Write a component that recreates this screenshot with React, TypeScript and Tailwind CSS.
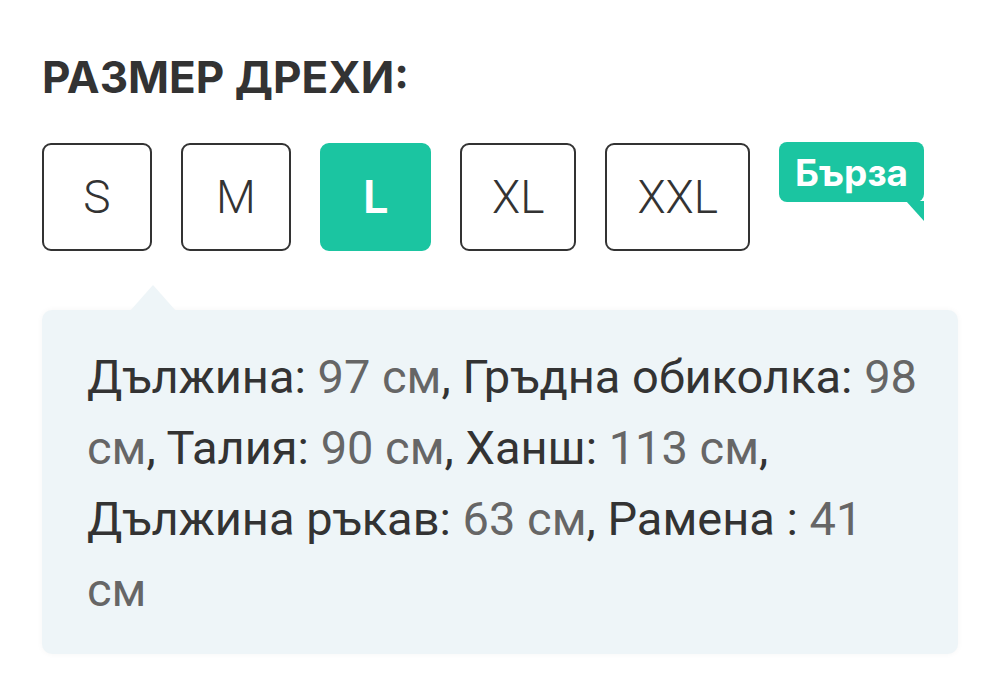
import React from "react";

const sizes = ["S", "M", "L", "XL", "XXL"];

export default function App() {
  const selected = "L";

  return (
    <div className="w-[1000px] h-[682px] bg-white px-[42px] pt-[55px] font-['Roboto',_'Liberation_Sans',_sans-serif] text-[#333]">
      <h2 className="font-['Inter',_'Roboto',_sans-serif] text-[44px] font-bold leading-none">РАЗМЕР ДРЕХИ:</h2>

      <div className="mt-[44px] flex items-start gap-[29px]">
        {sizes.map((size) => (
          <button
            key={size}
            className={
              size === selected
                ? "flex h-[108px] min-w-[111px] items-center justify-center rounded-[9px] border-[2.5px] border-[#1bc5a1] bg-[#1bc5a1] px-[30px] text-[46px] font-semibold text-white"
                : "flex h-[108px] min-w-[110px] items-center justify-center rounded-[9px] border-[2.5px] border-[#333] bg-white px-[30px] text-[46px] font-light text-[#333]"
            }
          >
            {size}
          </button>
        ))}

        {/* speech bubble badge */}
        <div className="relative -mt-px">
          <div className="flex h-[60px] items-center rounded-[8px] bg-[#1bc5a1] px-[16px] font-['Inter',_'Roboto',_sans-serif] text-[37px] font-bold leading-none text-white">
            Бърза
          </div>
          <svg className="absolute right-0 top-[59px]" width="18" height="20" viewBox="0 0 18 20">
            <polygon points="0,0 18,0 18,20" fill="#1bc5a1" />
          </svg>
        </div>
      </div>

      <div className="relative mt-[59px] rounded-[10px] bg-[#eef5f8] pl-[45px] pr-[36px] pt-[31px] pb-[29px] shadow-[0_0_6px_rgba(0,0,0,0.04)]">
        <svg className="absolute left-[88px] -top-[25px]" width="46" height="26" viewBox="0 0 46 26">
          <polygon points="0,26 23,0 46,26" fill="#eef5f8" />
        </svg>
        <p className="text-[47px] leading-[71px] text-[#333]">
          Дължина: <span className="text-[#666]">97 см</span>, Гръдна обиколка: <span className="text-[#666]">98 см</span>, Талия:{" "}
          <span className="text-[#666]">90 см</span>, Ханш: <span className="text-[#666]">113 см</span>, Дължина ръкав:{" "}
          <span className="text-[#666]">63 см</span>, Рамена : <span className="text-[#666]">41 см</span>
        </p>
      </div>
    </div>
  );
}
